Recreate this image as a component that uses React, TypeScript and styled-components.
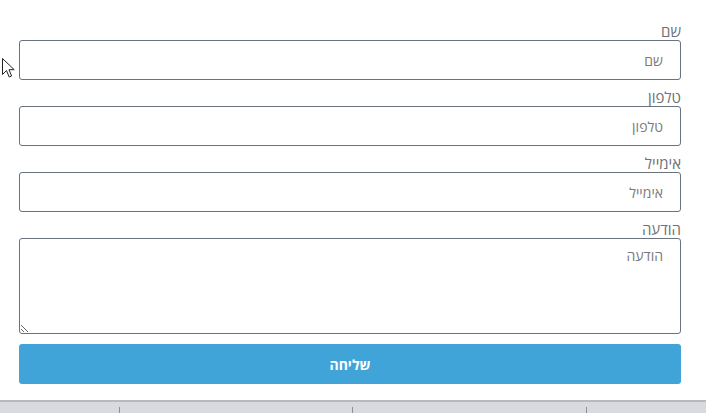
import React from "react";
import styled, { createGlobalStyle } from "styled-components";

const Global = createGlobalStyle`
  html, body { margin: 0; padding: 0; background: #ffffff; }
  body { font-family: "Open Sans", "DejaVu Sans", sans-serif; overflow: hidden; }
  * { box-sizing: border-box; }
`;

const Page = styled.div`
  position: relative;
  width: 706px;
  height: 413px;
  display: flex;
  flex-direction: column;
`;

const Form = styled.form`
  direction: rtl;
  display: flex;
  flex-direction: column;
  padding: 14px 25px 0 19px;
`;

const Field = styled.div`
  display: flex;
  flex-direction: column;
`;

const Label = styled.label`
  display: block;
  font-size: 15px;
  line-height: 20px;
  height: 26px;
  padding-top: 7px;
  color: #6d7177;
  text-align: right;
`;

const Input = styled.input`
  width: 100%;
  height: 40px;
  border: 1px solid #69727d;
  border-radius: 3px;
  padding: 0 17px;
  font-family: inherit;
  font-size: 14px;
  color: #333;
  direction: rtl;
  outline: none;
  &::placeholder { color: #7a7a7a; }
`;

const TextArea = styled.textarea`
  width: 100%;
  height: 96px;
  border: 1px solid #69727d;
  border-radius: 3px;
  padding: 7px 17px;
  font-family: inherit;
  font-size: 14px;
  line-height: 20px;
  direction: rtl;
  resize: both;
  outline: none;
  display: block;
  &::placeholder { color: #7a7a7a; }
`;

const Button = styled.button`
  margin-top: 10px;
  height: 40px;
  width: 100%;
  border: none;
  border-radius: 3px;
  background: #41a4d9;
  color: #ffffff;
  font-family: inherit;
  font-weight: 700;
  font-size: 14px;
  cursor: pointer;
`;

const Bar = styled.div`
  margin-top: 16px;
  flex: 1;
  background: #d9dadf;
  border-top: 2px solid #b8b9bc;
  display: flex;
`;

const Cell = styled.div<{ $w: number }>`
  width: ${(p) => p.$w}px;
  display: flex;
  justify-content: flex-end;
`;

const Sep = styled.span`
  width: 1px;
  margin-top: 5px;
  background: #8e8f93;
`;

const Cursor = styled.svg`
  position: absolute;
  left: 2px;
  top: 58px;
`;

export default function App() {
  return (
    <Page>
      <Global />
      <Form onSubmit={(e) => e.preventDefault()}>
        <Field>
          <Label>שם</Label>
          <Input placeholder="שם" />
        </Field>
        <Field>
          <Label>טלפון</Label>
          <Input placeholder="טלפון" />
        </Field>
        <Field>
          <Label>אימייל</Label>
          <Input placeholder="אימייל" />
        </Field>
        <Field>
          <Label>הודעה</Label>
          <TextArea placeholder="הודעה" />
        </Field>
        <Button type="submit">שליחה</Button>
      </Form>
      <Bar>
        <Cell $w={120}><Sep /></Cell>
        <Cell $w={233}><Sep /></Cell>
        <Cell $w={234}><Sep /></Cell>
      </Bar>
      <Cursor width="13" height="21" viewBox="0 0 13 21">
        <path
          d="M0.5 0.5 L0.5 16.5 L4.5 12.5 L7.2 19 L9.6 18 L7 11.7 L12.2 11.7 Z"
          fill="#ffffff"
          stroke="#222"
          strokeWidth="1"
          strokeLinejoin="miter"
        />
      </Cursor>
    </Page>
  );
}
